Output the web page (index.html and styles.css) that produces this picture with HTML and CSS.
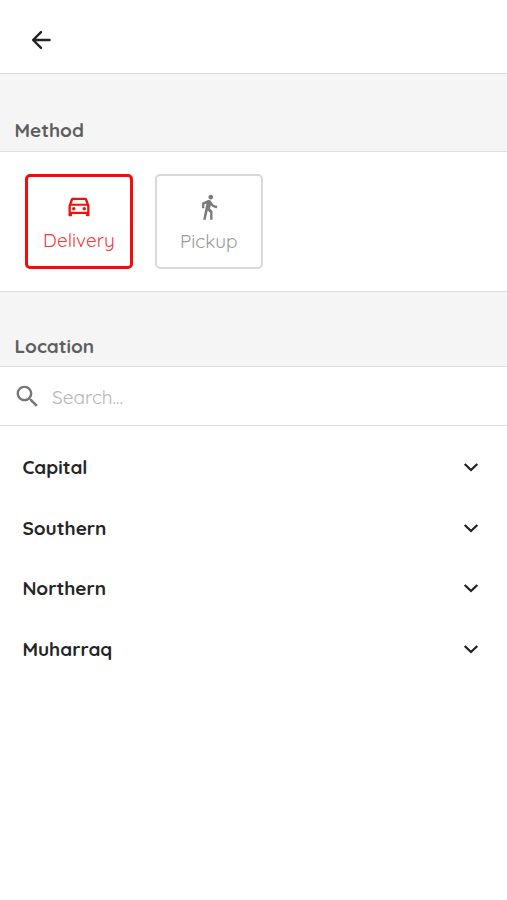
FILE: index.html
```html
<!DOCTYPE html>
<html lang="en">
<head>
<meta charset="utf-8">
<title>Delivery method</title>
<link rel="stylesheet" href="styles.css">
</head>
<body>
<header class="topbar">
  <svg class="back" viewBox="0 0 24 24"><path d="M20.600 12H4.500M12 4.100 4.100 12l7.900 7.900"/></svg>
</header>
<h2 class="section-title method-title">Method</h2>
<section class="methods">
  <div class="card selected">
    <svg class="icon" viewBox="0 0 24 24"><path d="M18.920 5.010C18.720 4.420 18.160 4 17.500 4h-11c-.66 0-1.210.42-1.420 1.010L3 11v8c0 .55.45 1 1 1h1c.55 0 1-.45 1-1v-1h12v1c0 .55.45 1 1 1h1c.55 0 1-.45 1-1v-8l-2.080-5.990zM6.850 6h10.290l1.080 3.110H5.770L6.850 6zM19 16H5v-5h14v5z"/><circle cx="7.500" cy="13.500" r="1.500"/><circle cx="16.500" cy="13.500" r="1.500"/></svg>
    <span>Delivery</span>
  </div>
  <div class="card">
    <svg class="icon" viewBox="0 0 24 24"><path d="M13.500 5.500c1.100 0 2-.9 2-2s-.9-2-2-2-2 .9-2 2 .9 2 2 2zM9.800 8.900L7 23h2.100l1.800-8 2.100 2v6h2v-7.500l-2.100-2 .6-3C14.800 12 16.800 13 19 13v-2c-1.900 0-3.500-1-4.300-2.400l-1-1.600c-.4-.6-1-1-1.700-1-.3 0-.5.1-.8.1L6 8.300V13h2V9.600l1.800-.7"/></svg>
    <span>Pickup</span>
  </div>
</section>
<h2 class="section-title location-title">Location</h2>
<div class="search">
  <svg class="glass" viewBox="0 0 24 24"><path d="M15.500 14h-.79l-.28-.27C15.410 12.590 16 11.110 16 9.500 16 5.910 13.090 3 9.500 3S3 5.910 3 9.500 5.910 16 9.500 16c1.610 0 3.090-.59 4.230-1.570l.27.28v.79l5 4.990L20.490 19l-4.990-5zm-6 0C7.010 14 5 11.990 5 9.500S7.010 5 9.500 5 14 7.010 14 9.500 11.990 14 9.500 14z"/></svg>
  <span class="placeholder">Search...</span>
</div>
<main class="regions">
  <div class="row"><span>Capital</span><svg class="chevron" viewBox="0 0 16 10"><path d="m1.700 2 6.300 6 6.300-6"/></svg></div>
  <div class="row"><span>Southern</span><svg class="chevron" viewBox="0 0 16 10"><path d="m1.700 2 6.300 6 6.300-6"/></svg></div>
  <div class="row"><span>Northern</span><svg class="chevron" viewBox="0 0 16 10"><path d="m1.700 2 6.300 6 6.300-6"/></svg></div>
  <div class="row"><span>Muharraq</span><svg class="chevron" viewBox="0 0 16 10"><path d="m1.700 2 6.300 6 6.300-6"/></svg></div>
</main>
</body>
</html>
```
FILE: styles.css
```css
* { box-sizing: border-box; }
body {
  margin: 0;
  min-height: 900px;
  background: #fff;
  color: #252525;
  font-family: Quicksand, Lato, "Liberation Sans", sans-serif;
  font-size: 19px;
  line-height: 24px;
}
.topbar {
  height: 74px;
  padding: 28px 29px 0;
  border-bottom: 1px solid #dcdcdc;
}
.back {
  display: block;
  width: 24px;
  height: 24px;
  fill: none;
  stroke: #222;
  stroke-width: 2.400;
  stroke-linecap: round;
  stroke-linejoin: round;
}
.section-title {
  margin: 0;
  padding: 0 14.400px;
  background: #f5f5f5;
  border-bottom: 1px solid #dedede;
  color: #5e5e5e;
  font-size: 19px;
  font-weight: 700;
}
.method-title { height: 78px; padding-top: 44px; }
.location-title { height: 75px; padding-top: 42px; }
.methods {
  display: flex;
  gap: 21px;
  height: 140px;
  padding: 22px 25px;
  border-bottom: 1px solid #dedede;
}
.card {
  display: flex;
  flex-direction: column;
  align-items: center;
  width: 108.500px;
  height: 95px;
  padding-top: 17px;
  border: 2px solid #d9d9d9;
  border-radius: 5px;
  color: #999;
}
.card.selected {
  width: 108px;
  margin-right: 0.500px;
  padding-top: 16px;
  border: 3px solid #f50b0b;
  color: #f33b3b;
}
.icon { width: 28px; height: 28px; margin-bottom: 8px; fill: #7b7b7b; }
.selected .icon { fill: #f01010; }
.selected span { margin-top: -1px; }
.search {
  display: flex;
  align-items: center;
  gap: 10px;
  height: 59px;
  padding: 1px 0 0 13px;
  border-bottom: 1px solid #dcdcdc;
}
.glass { width: 29px; height: 29px; fill: #777; }
.placeholder { color: #b5b5b5; }
.regions { padding-top: 11px; }
.row {
  display: flex;
  align-items: center;
  justify-content: space-between;
  height: 60.600px;
  padding: 0 28px 0 22.400px;
  font-weight: 700;
}
.chevron {
  width: 16px;
  height: 10px;
  fill: none;
  stroke: #222;
  stroke-width: 2.300;
}
```
